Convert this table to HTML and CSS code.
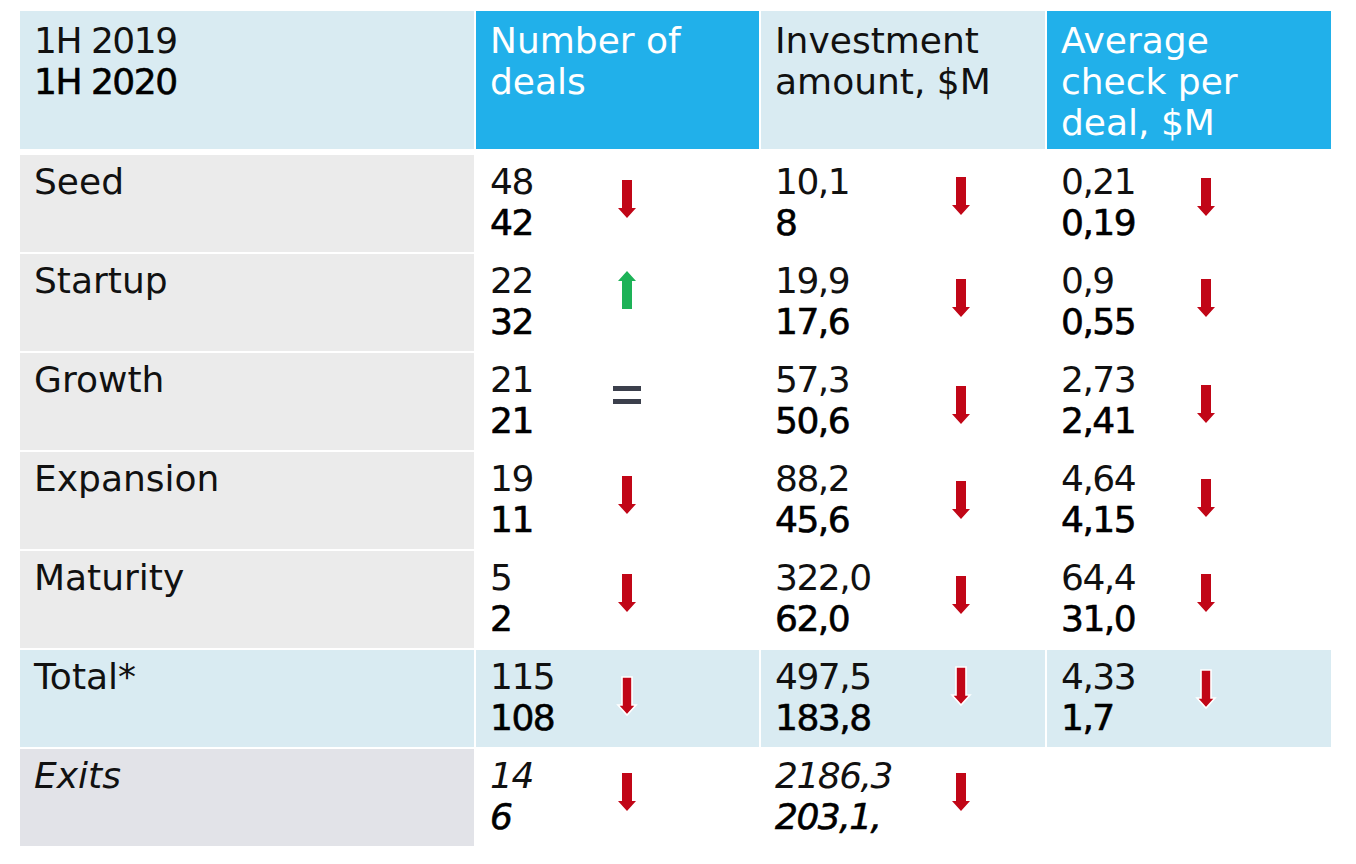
FILE: index.html
```html
<!DOCTYPE html>
<html lang="en">
<head>
<meta charset="utf-8">
<title>1H 2019 vs 1H 2020</title>
<link rel="stylesheet" href="styles.css">
</head>
<body>
<div class="table">
  <div class="cell head light"><div class="vals"><div>1H 2019</div><div class="strong">1H 2020</div></div></div>
  <div class="cell head blue">Number of<br>deals</div>
  <div class="cell head light">Investment<br>amount, $M</div>
  <div class="cell head blue">Average<br>check per<br>deal, $M</div>

  <div class="cell label grey">Seed</div>
  <div class="cell data c2"><div class="vals"><div>48</div><div class="strong">42</div></div><div class="ind m17"><svg class="arrow down" viewBox="0 0 22 42" width="22" height="42"><path d="M6 2H16V30H20L11 40L2 30H6Z"/></svg></div></div>
  <div class="cell data c3"><div class="vals"><div>10,1</div><div class="strong">8</div></div><div class="ind m14"><svg class="arrow down" viewBox="0 0 22 42" width="22" height="42"><path d="M6 2H16V30H20L11 40L2 30H6Z"/></svg></div></div>
  <div class="cell data c4"><div class="vals"><div>0,21</div><div class="strong">0,19</div></div><div class="ind m15"><svg class="arrow down" viewBox="0 0 22 42" width="22" height="42"><path d="M6 2H16V30H20L11 40L2 30H6Z"/></svg></div></div>

  <div class="cell label grey">Startup</div>
  <div class="cell data c2"><div class="vals"><div>22</div><div class="strong">32</div></div><div class="ind m9"><svg class="arrow up" viewBox="0 0 22 42" width="22" height="42"><path d="M11 2L20 12H16V40H6V12H2Z"/></svg></div></div>
  <div class="cell data c3"><div class="vals"><div>19,9</div><div class="strong">17,6</div></div><div class="ind m17"><svg class="arrow down" viewBox="0 0 22 42" width="22" height="42"><path d="M6 2H16V30H20L11 40L2 30H6Z"/></svg></div></div>
  <div class="cell data c4"><div class="vals"><div>0,9</div><div class="strong">0,55</div></div><div class="ind m17"><svg class="arrow down" viewBox="0 0 22 42" width="22" height="42"><path d="M6 2H16V30H20L11 40L2 30H6Z"/></svg></div></div>

  <div class="cell label grey">Growth</div>
  <div class="cell data c2"><div class="vals"><div>21</div><div class="strong">21</div></div><div class="ind m27"><svg class="equal" viewBox="0 0 28 19" width="28" height="19"><rect x="0" y="0" width="28" height="5"/><rect x="0" y="13" width="28" height="5"/></svg></div></div>
  <div class="cell data c3"><div class="vals"><div>57,3</div><div class="strong">50,6</div></div><div class="ind m25"><svg class="arrow down" viewBox="0 0 22 42" width="22" height="42"><path d="M6 2H16V30H20L11 40L2 30H6Z"/></svg></div></div>
  <div class="cell data c4"><div class="vals"><div>2,73</div><div class="strong">2,41</div></div><div class="ind m24"><svg class="arrow down" viewBox="0 0 22 42" width="22" height="42"><path d="M6 2H16V30H20L11 40L2 30H6Z"/></svg></div></div>

  <div class="cell label grey">Expansion</div>
  <div class="cell data c2"><div class="vals"><div>19</div><div class="strong">11</div></div><div class="ind m16"><svg class="arrow down" viewBox="0 0 22 42" width="22" height="42"><path d="M6 2H16V30H20L11 40L2 30H6Z"/></svg></div></div>
  <div class="cell data c3"><div class="vals"><div>88,2</div><div class="strong">45,6</div></div><div class="ind m21"><svg class="arrow down" viewBox="0 0 22 42" width="22" height="42"><path d="M6 2H16V30H20L11 40L2 30H6Z"/></svg></div></div>
  <div class="cell data c4"><div class="vals"><div>4,64</div><div class="strong">4,15</div></div><div class="ind m19"><svg class="arrow down" viewBox="0 0 22 42" width="22" height="42"><path d="M6 2H16V30H20L11 40L2 30H6Z"/></svg></div></div>

  <div class="cell label grey">Maturity</div>
  <div class="cell data c2"><div class="vals"><div>5</div><div class="strong">2</div></div><div class="ind m15"><svg class="arrow down" viewBox="0 0 22 42" width="22" height="42"><path d="M6 2H16V30H20L11 40L2 30H6Z"/></svg></div></div>
  <div class="cell data c3"><div class="vals"><div>322,0</div><div class="strong">62,0</div></div><div class="ind m17"><svg class="arrow down" viewBox="0 0 22 42" width="22" height="42"><path d="M6 2H16V30H20L11 40L2 30H6Z"/></svg></div></div>
  <div class="cell data c4"><div class="vals"><div>64,4</div><div class="strong">31,0</div></div><div class="ind m15"><svg class="arrow down" viewBox="0 0 22 42" width="22" height="42"><path d="M6 2H16V30H20L11 40L2 30H6Z"/></svg></div></div>

  <div class="cell label light">Total*</div>
  <div class="cell data c2 light"><div class="vals"><div>115</div><div class="strong">108</div></div><div class="ind m19"><svg class="arrow down outlined" viewBox="0 0 22 42" width="22" height="42"><path d="M6 2H16V30H20L11 40L2 30H6Z"/></svg></div></div>
  <div class="cell data c3 light"><div class="vals"><div>497,5</div><div class="strong">183,8</div></div><div class="ind m9"><svg class="arrow down outlined" viewBox="0 0 22 42" width="22" height="42"><path d="M6 2H16V30H20L11 40L2 30H6Z"/></svg></div></div>
  <div class="cell data c4 light"><div class="vals"><div>4,33</div><div class="strong">1,7</div></div><div class="ind m12"><svg class="arrow down outlined" viewBox="0 0 22 42" width="22" height="42"><path d="M6 2H16V30H20L11 40L2 30H6Z"/></svg></div></div>

  <div class="cell label grey2 italic">Exits</div>
  <div class="cell data c2 italic"><div class="vals"><div>14</div><div class="strong">6</div></div><div class="ind m16"><svg class="arrow down" viewBox="0 0 22 42" width="22" height="42"><path d="M6 2H16V30H20L11 40L2 30H6Z"/></svg></div></div>
  <div class="cell data c3 italic"><div class="vals"><div>2186,3</div><div class="strong">203,1,</div></div><div class="ind m16"><svg class="arrow down" viewBox="0 0 22 42" width="22" height="42"><path d="M6 2H16V30H20L11 40L2 30H6Z"/></svg></div></div>
  <div class="cell data c4 empty"></div>
</div>
</body>
</html>
```

FILE: styles.css
```css
html, body {
  background: #ffffff;
}

body {
  margin: 11px 0 0 20px;
  font-family: "DejaVu Sans", "Liberation Sans", sans-serif;
  font-size: 36px;
  line-height: 41px;
  color: #111111;
}

.table {
  display: grid;
  grid-template-columns: 454px 283px 284px 284px;
  grid-template-rows: 142px repeat(7, 97px);
  column-gap: 2px;
  row-gap: 2px;
}

.cell {
  padding: 6px 0 0 14px;
  box-sizing: border-box;
  min-width: 0;
}

.head {
  margin-bottom: 4px;
  padding-top: 9px;
}

.light {
  background: #d9ebf2;
}

.blue {
  background: #21b0ea;
  color: #ffffff;
}

.grey {
  background: #ebebeb;
}

.grey2 {
  background: #e2e3e8;
}

.strong {
  color: #000000;
  -webkit-text-stroke: 0.6px currentColor;
}

.italic {
  font-style: italic;
}

.data {
  display: grid;
  align-items: start;
}

.c2 {
  grid-template-columns: 123px 28px;
}

.c3 {
  grid-template-columns: 172px 28px;
}

.c4 {
  grid-template-columns: 131px 28px;
}

.vals {
  white-space: nowrap;
  letter-spacing: -1.5px;
}

.ind {
  display: flex;
  justify-content: center;
  line-height: 0;
}

.arrow.down path {
  fill: #c10617;
}

.arrow.up path {
  fill: #1db257;
}

.arrow.outlined path {
  stroke: #ffffff;
  stroke-width: 1.6;
  stroke-linejoin: miter;
}

.equal rect {
  fill: #3b3f4c;
}

.m9 { margin-top: 9px; }
.m12 { margin-top: 12px; }
.m14 { margin-top: 14px; }
.m15 { margin-top: 15px; }
.m16 { margin-top: 16px; }
.m17 { margin-top: 17px; }
.m19 { margin-top: 19px; }
.m21 { margin-top: 21px; }
.m24 { margin-top: 24px; }
.m25 { margin-top: 25px; }
.m27 { margin-top: 27px; }
```
